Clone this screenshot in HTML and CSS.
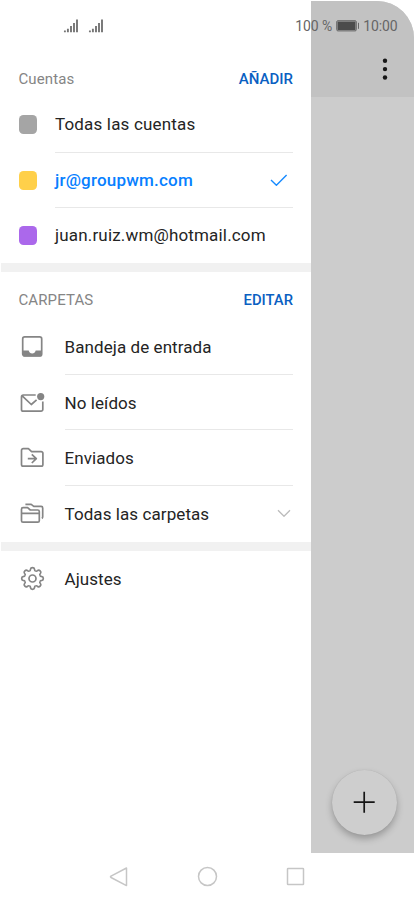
FILE: index.html
```html
<!DOCTYPE html>
<html lang="es">
<head>
<meta charset="utf-8">
<title>Correo</title>
<link rel="stylesheet" href="styles.css">
</head>
<body>
<div class="screen">
  <div class="status">
    <svg class="signal" width="41" height="14" viewBox="0 0 41 14"><path d="M1.900 11.500v1.800M4.900 9.700v3.600M8 7v6.300M11 4.100v9.200M14 .5v12.800M26.900 11.500v1.800M29.900 9.700v3.600M33 7v6.300M36 4.100v9.200M39 .5v12.800"/></svg>
    <span class="level">100 %</span>
    <svg class="battery" width="24" height="12" viewBox="0 0 24 12"><rect class="case" x=".7" y=".7" width="19.6" height="10.2" rx="1.2"/><rect class="charge" x="1.5" y="1.5" width="18" height="8.600"/><path class="tip" d="M22.500 2.800v6"/></svg>
    <span class="clock">10:00</span>
  </div>
  <div class="main">
    <nav class="drawer">
      <header class="head accounts-head"><span class="label">Cuentas</span><span class="action">AÑADIR</span></header>
      <div class="row account"><i class="swatch gray"></i><div class="cell"><span>Todas las cuentas</span></div></div>
      <div class="row account"><i class="swatch yellow"></i><div class="cell active"><span>jr@groupwm.com</span><svg class="check" width="18" height="14" viewBox="0 0 18 14"><path d="M1 7l5.400 5.200L16.600 2"/></svg></div></div>
      <div class="row account"><i class="swatch purple"></i><div class="cell last"><span>juan.ruiz.wm@hotmail.com</span></div></div>
      <div class="band"></div>
      <header class="head folders-head"><span class="label">CARPETAS</span><span class="action editar">EDITAR</span></header>
      <div class="row"><svg class="icon" width="26" height="26" viewBox="0 0 26 26"><rect x="3.700" y="2.900" width="19" height="19" rx="2"/><path class="fill" d="M3.700 16.400h6c.5 2 1.700 3 3.500 3s3-1 3.500-3h6v4.200a1.800 1.800 0 0 1-1.800 1.800H5.500a1.800 1.800 0 0 1-1.800-1.800z"/></svg><div class="cell"><span>Bandeja de entrada</span></div></div>
      <div class="row short"><svg class="icon" width="26" height="26" viewBox="0 0 26 26"><path d="M16.700 5H4.300a1.800 1.800 0 0 0-1.800 1.800v12.600a1.800 1.800 0 0 0 1.800 1.800h17.700a1.800 1.800 0 0 0 1.800-1.800V11.500M3.200 5.800l9.100 8.700 5.300-4.600"/><circle class="fill" cx="21.700" cy="6.600" r="3.600"/></svg><div class="cell"><span>No leídos</span></div></div>
      <div class="row"><svg class="icon" width="26" height="26" viewBox="0 0 26 26"><path d="M4.200 3.700h5.200l3.200 2.900h9.600a1.700 1.700 0 0 1 1.700 1.700v11.200a1.700 1.700 0 0 1-1.700 1.700H4.200a1.700 1.700 0 0 1-1.700-1.700V5.400a1.700 1.700 0 0 1 1.700-1.700zM8.800 13.700h8.500M12.800 9.400l4.500 4.300-4.500 4.300"/></svg><div class="cell"><span>Enviados</span></div></div>
      <div class="row"><svg class="icon" width="26" height="26" viewBox="0 0 26 26"><path d="M4 6.700h4.600l2.700 2.300h7.500a1.500 1.500 0 0 1 1.500 1.500v9.200a1.500 1.500 0 0 1-1.500 1.500H4a1.500 1.500 0 0 1-1.500-1.500V8.200A1.500 1.500 0 0 1 4 6.700zM2.500 12.400h17.800M6.400 3.300h5.800l2.600 2h7.300a1.600 1.600 0 0 1 1.600 1.600v8.900c0 .8-.3 1.300-.8 1.700"/></svg><div class="cell last"><span>Todas las carpetas</span><svg class="chevron" width="14" height="9" viewBox="0 0 14 9"><path d="M1 1.200l6 6 6-6"/></svg></div></div>
      <div class="band"></div>
      <div class="row"><svg class="icon" width="26" height="26" viewBox="-13.500 -12.500 26 26">
        <defs><path id="tooth" d="M-3.060-7.390Q-1.950-7.850-1.950-9.400Q-1.800-10.800 0-10.800Q1.800-10.800 1.950-9.400Q1.950-7.850 3.060-7.390"/></defs>
        <use href="#tooth"/><use href="#tooth" transform="rotate(45)"/><use href="#tooth" transform="rotate(90)"/><use href="#tooth" transform="rotate(135)"/><use href="#tooth" transform="rotate(180)"/><use href="#tooth" transform="rotate(225)"/><use href="#tooth" transform="rotate(270)"/><use href="#tooth" transform="rotate(315)"/>
        <circle r="3.500"/></svg><div class="cell last"><span>Ajustes</span></div></div>
    </nav>
    <section class="page">
      <div class="toolbar"><svg width="6" height="24" viewBox="0 0 6 24"><circle cx="3" cy="3.700" r="2.200"/><circle cx="3" cy="12.100" r="2.200"/><circle cx="3" cy="20.500" r="2.200"/></svg></div>
      <button class="fab" aria-label="Redactar"><svg width="22" height="22" viewBox="0 0 22 22"><path d="M11.200 .8v21M.7 11.200h21"/></svg></button>
    </section>
  </div>
  <footer class="nav">
    <svg width="20" height="20" viewBox="0 0 20 20"><path d="M17.500 1v17.600L2 10.500q-1-.7 0-1.400z"/></svg>
    <svg width="20" height="20" viewBox="0 0 20 20"><circle cx="9.500" cy="9.500" r="9"/></svg>
    <svg width="20" height="20" viewBox="0 0 20 20"><rect x="1.500" y="1.500" width="16" height="16" rx=".6"/></svg>
  </footer>
</div>
</body>
</html>
```
FILE: styles.css
```css
* { box-sizing: border-box; }
body { margin: 0; background: #fff; font-family: Roboto, sans-serif; }
svg { display: block; flex: none; fill: none; stroke-linejoin: round; overflow: visible; }
.screen { position: relative; width: 415px; height: 900px; overflow: hidden; background: #fff; }
.status { position: absolute; z-index: 2; top: 16px; left: 0; width: 397.500px; height: 20px; display: flex; align-items: center; color: #666; font-size: 14px; letter-spacing: -.1px; }
.signal { margin-left: 63px; stroke: #757575; stroke-width: 1.900; }
.level { margin-left: auto; }
.battery { margin: 0 3px 0 4px; }
.case, .tip { stroke: #666; stroke-width: 1; }
.charge { fill: #4b4b4b; }
.main { display: flex; height: 853px; padding: 1px 1px 0; }
.drawer { width: 310px; padding-top: 59px; }
.head { display: flex; justify-content: space-between; align-items: center; padding: 0 18px 0 17.500px; }
.accounts-head { height: 36px; padding-top: 1px; }
.folders-head { height: 47px; padding-top: 9px; }
.label { color: #858585; font-size: 15px; letter-spacing: .1px; }
.action { color: #0a60c2; font-size: 15px; font-weight: 500; }
.action.editar { font-size: 14.800px; }
.row { display: flex; align-items: center; height: 56px; padding: 0 18px 0 17.500px; }
.row.account { height: 55px; }
.accounts-head + .row.account { height: 57px; }
.row.account:nth-child(2) { height: 57px; }
.row.short { height: 55px; }
.short .cell { padding-top: 1px; }
.cell { flex: 1; height: 100%; display: flex; justify-content: space-between; align-items: center; border-bottom: 1px solid #e8e8e8; color: #242424; font-size: 17px; letter-spacing: .08px; white-space: nowrap; }
.account .cell { letter-spacing: .17px; }
.cell.last { border-color: transparent; }
.account .cell.active { color: #087fff; font-weight: 500; letter-spacing: .2px; }
.swatch { width: 18.500px; height: 18.500px; margin: 0 18px 0 0; border-radius: 4.500px; }
.gray { background: #a5a5a5; }
.yellow { background: #ffd04a; }
.purple { background: #ab68eb; }
.check { margin-right: 5px; stroke: #168aff; stroke-width: 1.400; }
.chevron { margin-right: 2.500px; stroke: #bcbcbc; stroke-width: 1.300; }
.icon { margin-right: 20px; stroke: #858585; stroke-width: 1.700; }
.icon .fill { fill: #858585; stroke: none; }
.band { height: 9px; background: #f1f1f1; }
.page { width: 103px; display: flex; flex-direction: column; justify-content: space-between; background: #ccc; border-radius: 0 37px 0 0; overflow: hidden; }
.toolbar { height: 96px; padding: 56px 26px 0 0; display: flex; justify-content: flex-end; background: #c2c2c2; }
.toolbar svg { fill: #161616; }
.fab { width: 65px; height: 65px; margin: 0 0 18.500px 20.500px; padding: 0; display: grid; place-items: center; border: 0; border-radius: 50%; background: #cecece; box-shadow: 0 4px 7px rgba(0,0,0,.25), 0 0 1px rgba(0,0,0,.15); }
.fab svg { stroke: #161616; stroke-width: 1.700; }
.nav { height: 47px; display: flex; justify-content: space-between; align-items: center; padding: 0 109px; }
.nav svg { stroke: #c6c6c6; stroke-width: 1.500; }
```
